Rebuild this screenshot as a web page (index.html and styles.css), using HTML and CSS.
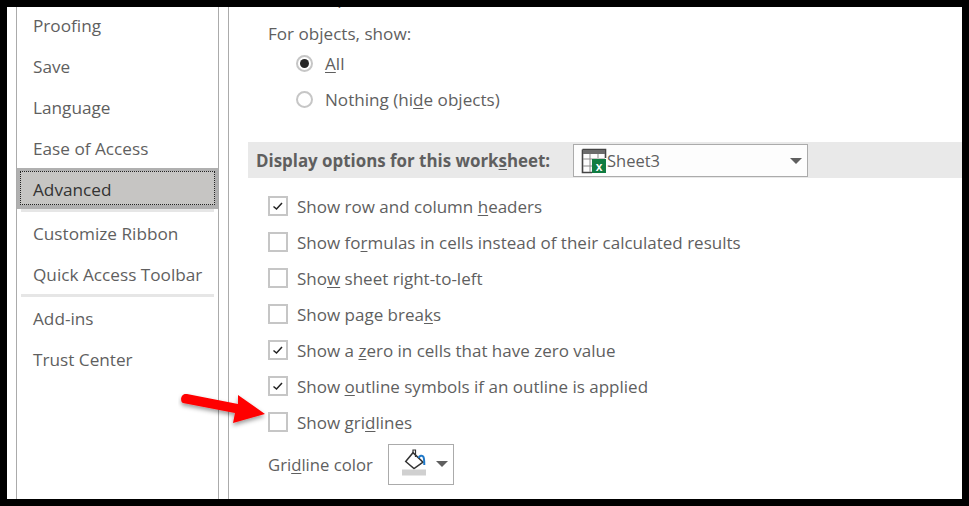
FILE: index.html
```html
<!DOCTYPE html>
<html lang="en">
<head>
<meta charset="utf-8">
<title>Excel Options - Advanced</title>
<link rel="stylesheet" href="styles.css">
</head>
<body>
<div class="frame">
  <nav class="nav">
    <div class="nav-item top">Proofing</div>
    <div class="nav-item">Save</div>
    <div class="nav-item">Language</div>
    <div class="nav-item">Ease of Access</div>
    <div class="nav-item selected"><span class="focus">Advanced</span></div>
    <div class="nav-sep first"></div>
    <div class="nav-item">Customize Ribbon</div>
    <div class="nav-item">Quick Access Toolbar</div>
    <div class="nav-sep"></div>
    <div class="nav-item">Add-ins</div>
    <div class="nav-item">Trust Center</div>
  </nav>
  <main class="pane">
    <div class="clipped">Group dates in the AutoFilter menu</div>
    <div class="label">For objects, show:</div>
    <div class="radio-row"><span class="radio on"></span><span><u>A</u>ll</span></div>
    <div class="radio-row"><span class="radio"></span><span>Nothing (hi<u>d</u>e objects)</span></div>
    <div class="band">
      <span class="band-title">Display options for this work<u>s</u>heet:</span>
      <div class="combo">
        <svg class="sheet-icon" width="26" height="26" viewBox="0 0 26 26">
          <path d="M1.500 1.500H24.500V10M1.500 1.500V24.500H11" fill="none" stroke="#444" stroke-width="1.600"/>
          <rect x="2" y="2" width="22" height="4" fill="#6b6b6b"/>
          <path d="M2 11H24M2 18H11M9 6V24M17 6V10" fill="none" stroke="#8a8a8a" stroke-width="1"/>
          <rect x="11" y="11" width="14" height="14" fill="#107c41"/>
          <text x="18" y="22.500" class="x-mark">x</text>
        </svg>
        <span class="combo-text">Sheet3</span>
        <span class="caret"></span>
      </div>
    </div>
    <div class="checks">
      <div class="check-row"><span class="box"><svg width="16" height="16" viewBox="0 0 16 16"><path d="M3.500 8.500L6.500 11L12 5" fill="none" stroke="#222" stroke-width="1.500"/></svg></span><span>Show row and column <u>h</u>eaders</span></div>
      <div class="check-row"><span class="box"></span><span>Show fo<u>r</u>mulas in cells instead of their calculated results</span></div>
      <div class="check-row"><span class="box"></span><span>Sho<u>w</u> sheet right-to-left</span></div>
      <div class="check-row"><span class="box"></span><span>Show page brea<u>k</u>s</span></div>
      <div class="check-row"><span class="box"><svg width="16" height="16" viewBox="0 0 16 16"><path d="M3.500 8.500L6.500 11L12 5" fill="none" stroke="#222" stroke-width="1.500"/></svg></span><span>Show a <u>z</u>ero in cells that have zero value</span></div>
      <div class="check-row"><span class="box"><svg width="16" height="16" viewBox="0 0 16 16"><path d="M3.500 8.500L6.500 11L12 5" fill="none" stroke="#222" stroke-width="1.500"/></svg></span><span>Show <u>o</u>utline symbols if an outline is applied</span></div>
      <div class="check-row"><span class="box"></span><span>Show gri<u>d</u>lines</span></div>
    </div>
    <div class="color-row">
      <span>Gri<u>d</u>line color</span>
      <div class="color-btn">
        <svg class="bucket" width="26" height="32" viewBox="0 0 26 32">
          <path d="M3.700 13.500L11 4.700L21 14.200L12 20.500Z" fill="#fff" stroke="#333" stroke-width="1.500"/>
          <path d="M11 4.700V2H13.500V9" fill="none" stroke="#333" stroke-width="1.200"/>
          <path d="M17 10C17 7.500 20.500 7 21.500 9C22.300 11 22.300 14 22.300 17" fill="none" stroke="#1f78c8" stroke-width="2"/>
          <rect x="0" y="21.500" width="24" height="6" fill="#d0d0d0"/>
        </svg>
        <span class="caret"></span>
      </div>
    </div>
  </main>
  <svg class="arrow" width="100" height="48" viewBox="0 0 100 48">
    <defs><filter id="sh" x="-20%" y="-30%" width="140%" height="170%"><feDropShadow dx="0" dy="2.500" stdDeviation="2" flood-color="#000" flood-opacity=".4"/></filter></defs>
    <path d="M9 6L60 16L60 7L87 26L55 35L57 25L5 15C2 14 2 5 9 6Z" fill="#f00" filter="url(#sh)"/>
  </svg>
</div>
</body>
</html>
```
FILE: styles.css
```css
html, body { margin: 0; padding: 0; }
body { width: 969px; height: 506px; overflow: hidden; background: #000; }
.frame {
  position: relative;
  box-sizing: border-box;
  width: 955px;
  height: 492px;
  margin: 7px 0 0 7px;
  background: #fff;
  display: flex;
  overflow: hidden;
  font-family: "Open Sans", "Liberation Sans", sans-serif;
  font-size: 17.100px;
  color: #5f5f5f;
}
u { text-underline-offset: 2px; text-decoration-thickness: 1px; }
.nav {
  box-sizing: border-box;
  width: 203px;
  height: 492px;
  margin-left: 9px;
  border-left: 1px solid #ababab;
  border-right: 1px solid #ababab;
  flex: none;
  display: flex;
  flex-direction: column;
  font-size: 17.200px;
}
.nav-item {
  height: 41px;
  flex: none;
  display: flex;
  align-items: center;
  padding-left: 16px;
}
.nav-item.top { margin-top: -2px; }
.nav-item.selected {
  box-sizing: border-box;
  margin-top: -1px;
  background: #c6c5c3;
  color: #333;
  padding: 3px 3px 4px 3px;
  box-shadow: inset 0 0 0 3px #b0b0b0, inset 0 -4px 0 #b0b0b0;
}
.focus {
  flex: 1;
  align-self: stretch;
  display: flex;
  align-items: center;
  padding: 2px 0 0 13px;
  outline: 1px dotted #222;
  outline-offset: -1px;
}
.nav-sep {
  height: 3px;
  margin: -1px 4px 1px;
  background: #e6e6e6;
  flex: none;
}
.nav-sep.first { margin-top: 0; }
.pane {
  margin-left: 9px;
  border-left: 1px solid #ababab;
  flex: 1;
  min-width: 0;
  height: 492px;
  overflow: hidden;
  display: flex;
  flex-direction: column;
}
.clipped { height: 24px; margin-top: -21px; padding-left: 68px; flex: none; white-space: nowrap; }
.label { height: 23px; line-height: 24px; margin-top: 12px; padding-left: 39px; flex: none; }
.radio-row {
  height: 36px;
  flex: none;
  display: flex;
  align-items: center;
  gap: 12px;
  padding-left: 67px;
}
.radio {
  box-sizing: border-box;
  width: 17px;
  height: 17px;
  border-radius: 50%;
  border: 2px solid #c6c6c6;
  background: #fff;
  flex: none;
  display: flex;
  align-items: center;
  justify-content: center;
}
.radio.on::after {
  content: "";
  width: 9px;
  height: 9px;
  border-radius: 50%;
  background: #262626;
}
.band {
  height: 36px;
  margin-top: 25px;
  margin-left: 19px;
  background: #e9e9e9;
  flex: none;
  display: flex;
  align-items: center;
  box-sizing: border-box;
  padding-left: 8px;
}
.band-title { font-weight: 700; width: 317px; flex: none; white-space: nowrap; font-size: 16.900px; }
.combo {
  box-sizing: border-box;
  width: 235px;
  height: 33px;
  margin-top: 1px;
  border: 1px solid #ababab;
  background: #fdfdfd;
  display: flex;
  align-items: center;
  padding: 0 3px 0 7px;
  font-size: 16.500px;
}
.sheet-icon { flex: none; margin-top: 1px; }
.x-mark { font-family: "Liberation Sans", sans-serif; font-size: 12px; font-weight: 700; fill: #fff; text-anchor: middle; }
.combo-text { flex: 1; }
.caret {
  width: 0;
  height: 0;
  border-left: 6px solid transparent;
  border-right: 6px solid transparent;
  border-top: 6px solid #5f5f5f;
  flex: none;
  margin-right: 2px;
}
.checks { margin-top: 10px; flex: none; display: flex; flex-direction: column; font-size: 17px; }
.check-row {
  height: 36px;
  flex: none;
  display: flex;
  align-items: center;
  gap: 9px;
  padding-left: 39px;
  white-space: nowrap;
}
.box {
  box-sizing: border-box;
  width: 20px;
  height: 20px;
  border: 2px solid #c6c6c6;
  background: #fff;
  flex: none;
  display: flex;
}
.color-row {
  display: flex;
  align-items: center;
  height: 40px;
  margin-top: 4px;
  padding-left: 39px;
  flex: none;
  font-size: 16.700px;
}
.color-row > span { width: 120px; flex: none; }
.color-btn {
  box-sizing: border-box;
  width: 66px;
  height: 41px;
  border: 1px solid #ababab;
  display: flex;
  align-items: center;
  gap: 8px;
  padding-left: 13px;
}
.bucket { flex: none; }
.arrow { position: absolute; left: 171px; top: 381px; }
```
